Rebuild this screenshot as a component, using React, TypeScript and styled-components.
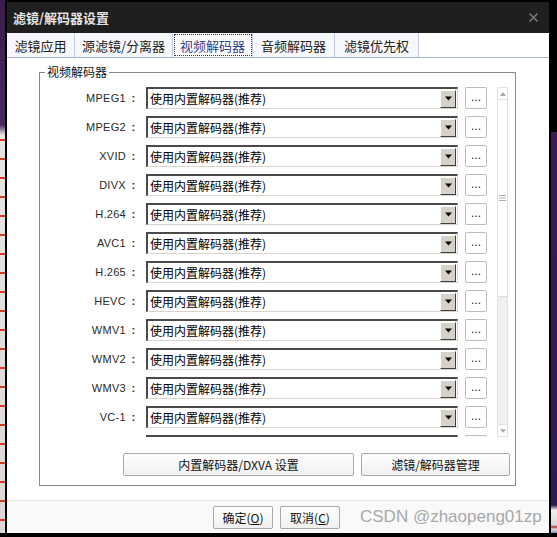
import React from "react";
import styled, { createGlobalStyle } from "styled-components";

const GlobalStyle = createGlobalStyle`
  html, body {
    margin: 0;
    padding: 0;
    background: #000;
  }
  body {
    font-family: "Liberation Sans", "Noto Sans CJK SC", sans-serif;
  }
`;

const codecs = [
  "MPEG1",
  "MPEG2",
  "XVID",
  "DIVX",
  "H.264",
  "AVC1",
  "H.265",
  "HEVC",
  "WMV1",
  "WMV2",
  "WMV3",
  "VC-1",
];

const tabs = [
  { name: "滤镜应用", width: 68 },
  { name: "源滤镜/分离器", width: 98 },
  { name: "视频解码器", width: 80 },
  { name: "音频解码器", width: 82 },
  { name: "滤镜优先权", width: 84 },
];

const Screen = styled.div`
  width: 557px;
  height: 537px;
  display: flex;
  align-items: flex-start;
  overflow: hidden;
  background: #000;
`;

const SideStrip = styled.div<{ side: "left" | "right" }>`
  width: ${(p) => (p.side === "left" ? 5 : 6)}px;
  height: 533px;
  flex-shrink: 0;
  background: ${(p) =>
    p.side === "left"
      ? `repeating-linear-gradient(180deg, transparent 0 9px, #d23a2a 9px 11px, transparent 11px 19px),
         linear-gradient(180deg, #3b1c4c 0, #4a2a5e 125px, #e9e4e4 135px, #dcd6d6 533px)`
      : `linear-gradient(180deg, #000 0 2px, #3a1a58 2px, #2e1a56 375px, #eee 380px, #d8d8d8 395px, #c02a2a 397px, #ddd 399px, #1e3c8e 408px, #1b3480 530px)`};
  background-size: 100% 100%;
  background-position: 0 130px, 0 0;
  background-repeat: no-repeat;
`;

const Dialog = styled.div`
  width: 542px;
  height: 531px;
  flex-shrink: 0;
  border: 2px solid #000;
  background: #fff;
  display: flex;
  flex-direction: column;
`;

const TitleBar = styled.div`
  height: 31px;
  background: #1f1f1f;
  display: flex;
  align-items: center;
  justify-content: space-between;
  padding: 0 11px 0 6px;
  color: #e4e4e4;
  font-family: "Noto Sans CJK SC", sans-serif;
  font-size: 13px;
  font-weight: bold;
`;

const CloseIcon = styled.svg`
  width: 9px;
  height: 9px;
`;

const TabBar = styled.div`
  height: 24px;
  display: flex;
  border-bottom: 1px solid #aab3d8;
  background: #fff;
`;

const Tab = styled.div<{ active?: boolean; w: number }>`
  width: ${(p) => p.w}px;
  box-sizing: border-box;
  height: 24px;
  display: flex;
  align-items: center;
  justify-content: center;
  font-family: "Noto Sans CJK SC", sans-serif;
  font-size: 13px;
  color: ${(p) => (p.active ? "#2d3c8c" : "#222")};
  background: ${(p) => (p.active ? "#fff" : "#f7f8fc")};
  border-right: 1px solid #c4c9e3;
  outline: ${(p) => (p.active ? "1px dotted #333" : "none")};
  outline-offset: -2px;
`;

const Body = styled.div`
  flex: 1;
  padding: 7px 0 0 32px;
  background: #fff;
`;

const Group = styled.fieldset`
  margin: 0;
  padding: 8px 0 9px 0;
  width: 475px;
  border: 1px solid #8a8a8a;
  display: flex;
  flex-direction: column;
`;

const Legend = styled.legend`
  margin-left: 5px;
  padding: 0 2px;
  font-family: "Noto Sans CJK SC", sans-serif;
  font-size: 12px;
  line-height: 14px;
  color: #111;
`;

const ListPanel = styled.div`
  display: flex;
  align-items: flex-start;
`;

const Clip = styled.div`
  width: 447px;
  height: 350px;
  overflow: hidden;
  display: flex;
  flex-direction: column;
  gap: 7px;
`;

const Row = styled.div`
  display: grid;
  grid-template-columns: 101px 312px 22px;
  column-gap: 5px;
  align-items: center;
  height: 22px;
  flex-shrink: 0;
  & > :last-child {
    margin-left: 2px;
  }
`;

const Label = styled.div`
  display: flex;
  justify-content: flex-end;
  align-items: center;
  font-family: "Liberation Sans", sans-serif;
  font-size: 11px;
  letter-spacing: 0.3px;
  color: #2a2a2a;
  white-space: nowrap;
`;

const Colon = styled.span`
  width: 15px;
  text-align: center;
  font-weight: bold;
  font-size: 11px;
`;

const Select = styled.div`
  box-sizing: border-box;
  height: 22px;
  border-top: 2px solid #4a4a4a;
  border-left: 2px solid #4a4a4a;
  border-right: 1px solid #d8d4cc;
  border-bottom: 1px solid #d8d4cc;
  display: flex;
  align-items: center;
  justify-content: space-between;
  padding: 0 1px 0 2px;
  font-family: "Noto Sans CJK SC", sans-serif;
  font-size: 12px;
  color: #000;
  background: #fff;
`;

const DropButton = styled.div`
  box-sizing: border-box;
  width: 16px;
  height: 18px;
  background: #d6d2ca;
  border-top: 1px solid #fff;
  border-left: 1px solid #fff;
  border-right: 1px solid #404040;
  border-bottom: 1px solid #404040;
  display: flex;
  align-items: center;
  justify-content: center;
`;

const DotsButton = styled.div`
  box-sizing: border-box;
  width: 22px;
  height: 22px;
  border: 1px solid #bcbcbc;
  border-radius: 2px;
  background: #fff;
  font-size: 12px;
  line-height: 18px;
  text-align: center;
  color: #222;
`;

const ScrollBar = styled.div`
  box-sizing: border-box;
  margin-left: 10px;
  width: 11px;
  height: 350px;
  border: 1px solid #e2e2e2;
  display: flex;
  flex-direction: column;
  background: #f0f0f0;
`;

const ScrollArrow = styled.div`
  height: 11px;
  flex-shrink: 0;
  background: #fff;
  display: flex;
  align-items: center;
  justify-content: center;
  border-bottom: 1px solid #e2e2e2;
  &:last-child {
    border-bottom: none;
    border-top: 1px solid #e2e2e2;
    margin-top: auto;
  }
`;

const Thumb = styled.div`
  height: 196px;
  background: #fff;
  border-bottom: 1px solid #dcdcdc;
  display: flex;
  align-items: center;
  justify-content: center;
`;

const ActionRow = styled.div`
  margin-top: 16px;
  display: flex;
  justify-content: flex-end;
  gap: 7px;
  padding-right: 5px;
`;

const PushButton = styled.div<{ w: number }>`
  box-sizing: border-box;
  width: ${(p) => p.w}px;
  height: 23px;
  border: 1px solid #a9a9a9;
  border-radius: 2px;
  background: linear-gradient(180deg, #ffffff, #f0f0f0);
  display: flex;
  align-items: center;
  justify-content: center;
  font-family: "Noto Sans CJK SC", sans-serif;
  font-size: 12px;
  color: #111;
`;

const Footer = styled.div`
  height: 32px;
  border-top: 1px solid #e4e4e4;
  background: #f9f9f9;
  display: flex;
  align-items: center;
  padding-left: 206px;
  gap: 7px;
`;

const Underline = styled.span`
  text-decoration: underline;
`;

const Watermark = styled.div`
  margin-left: 13px;
  font-family: "Liberation Sans", sans-serif;
  font-size: 17px;
  color: #a8a8a8;
  white-space: nowrap;
`;

function TriangleDown({ color = "#000", size = 7 }: { color?: string; size?: number }) {
  return (
    <svg width={size} height={Math.ceil(size / 2) + 1} viewBox="0 0 7 4">
      <path d="M0 0 H7 L3.5 4 Z" fill={color} />
    </svg>
  );
}

function TriangleUp({ color = "#aaa" }: { color?: string }) {
  return (
    <svg width="6" height="4" viewBox="0 0 6 4">
      <path d="M0 4 H6 L3 0 Z" fill={color} />
    </svg>
  );
}

function CodecRow({ name }: { name?: string }) {
  return (
    <Row>
      <Label>
        {name && (
          <>
            {name}
            <Colon>:</Colon>
          </>
        )}
      </Label>
      <Select>
        <span>{name ? "使用内置解码器(推荐)" : ""}</span>
        <DropButton>
          <TriangleDown />
        </DropButton>
      </Select>
      <DotsButton>{name ? "..." : ""}</DotsButton>
    </Row>
  );
}

export default function App() {
  return (
    <>
      <GlobalStyle />
      <Screen>
        <SideStrip side="left" />
        <Dialog>
          <TitleBar>
            <span>滤镜/解码器设置</span>
            <CloseIcon viewBox="0 0 9 9">
              <path d="M0.5 0.5 L8.5 8.5 M8.5 0.5 L0.5 8.5" stroke="#7a7a7a" strokeWidth="1.5" />
            </CloseIcon>
          </TitleBar>
          <TabBar>
            {tabs.map((t) => (
              <Tab key={t.name} w={t.width} active={t.name === "视频解码器"}>
                {t.name}
              </Tab>
            ))}
          </TabBar>
          <Body>
            <Group>
              <Legend>视频解码器</Legend>
              <ListPanel>
                <Clip>
                  {codecs.map((c) => (
                    <CodecRow key={c} name={c} />
                  ))}
                  {/* next row peeking in below the scroll edge */}
                  <CodecRow />
                </Clip>
                <ScrollBar>
                  <ScrollArrow>
                    <TriangleUp />
                  </ScrollArrow>
                  <Thumb>
                    <svg width="7" height="6" viewBox="0 0 7 6">
                      <path d="M0 0.5 H7 M0 3 H7 M0 5.5 H7" stroke="#b0b0b0" strokeWidth="1" />
                    </svg>
                  </Thumb>
                  <ScrollArrow>
                    <TriangleDown color="#aaa" size={6} />
                  </ScrollArrow>
                </ScrollBar>
              </ListPanel>
              <ActionRow>
                <PushButton w={231}>内置解码器/DXVA 设置</PushButton>
                <PushButton w={149}>滤镜/解码器管理</PushButton>
              </ActionRow>
            </Group>
          </Body>
          <Footer>
            <PushButton w={60}>
              确定(<Underline>O</Underline>)
            </PushButton>
            <PushButton w={60}>
              取消(<Underline>C</Underline>)
            </PushButton>
            <Watermark>CSDN @zhaopeng01zp</Watermark>
          </Footer>
        </Dialog>
        <SideStrip side="right" />
      </Screen>
    </>
  );
}
